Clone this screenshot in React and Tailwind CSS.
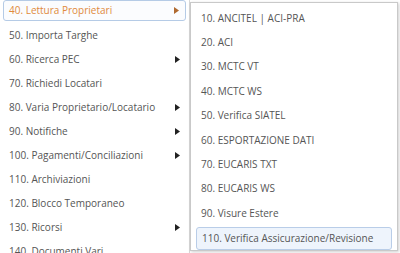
import React from "react";

const left = [
  { t: "50. Importa Targhe" },
  { t: "60. Ricerca PEC", a: true },
  { t: "70. Richiedi Locatari" },
  { t: "80. Varia Proprietario/Locatario", a: true },
  { t: "90. Notifiche", a: true },
  { t: "100. Pagamenti/Conciliazioni", a: true },
  { t: "110. Archiviazioni" },
  { t: "120. Blocco Temporaneo" },
  { t: "130. Ricorsi", a: true },
  { t: "140. Documenti Vari" },
];

const right = [
  "10. ANCITEL | ACI-PRA",
  "20. ACI",
  "30. MCTC VT",
  "40. MCTC WS",
  "50. Verifica SIATEL",
  "60. ESPORTAZIONE DATI",
  "70. EUCARIS TXT",
  "80. EUCARIS WS",
  "90. Visure Estere",
];

function Arrow({ color = "#222" }) {
  return (
    <svg width="5" height="7" viewBox="0 0 5 7" className="shrink-0">
      <path d="M0 0 L5 3.5 L0 7 Z" fill={color} />
    </svg>
  );
}

export default function App() {
  return (
    <div
      className="relative w-[400px] h-[253px] overflow-hidden bg-white text-[10px] text-[#555]"
      style={{ fontFamily: '"Open Sans", "Liberation Sans", sans-serif' }}
    >
      <div className="w-[190px] h-[253px] border-r border-[#d8d8d8] bg-white">
        <div className="mx-[3px] h-[21px] flex items-center justify-between pl-[5px] pr-[6px] border border-[#b5cbe6] rounded-[3px] bg-[#fbfcfe] text-[#e08a3c]">
          <span>40. Lettura Proprietari</span>
          <Arrow color="#b06a30" />
        </div>
        <div className="mt-[2px] flex flex-col">
          {left.map((it) => (
            <div key={it.t} className="h-[24px] flex items-center justify-between pl-[9px] pr-[9px]">
              <span>{it.t}</span>
              {it.a && <Arrow />}
            </div>
          ))}
        </div>
      </div>
      <div className="absolute left-[190px] top-[2px] w-[208px] h-[249px] bg-white border border-[#c9c9c9] shadow-[1px_1px_3px_rgba(0,0,0,0.2)] pt-[3px]">
        {right.map((t) => (
          <div key={t} className="h-[24.4px] flex items-center pl-[10px]">
            <span>{t}</span>
          </div>
        ))}
        <div className="mx-[5px] mt-[1px] h-[23px] flex items-center pl-[5px] border border-[#b9cde8] rounded-[3px] bg-[#eef4fc]">
          110. Verifica Assicurazione/Revisione
        </div>
      </div>
    </div>
  );
}
